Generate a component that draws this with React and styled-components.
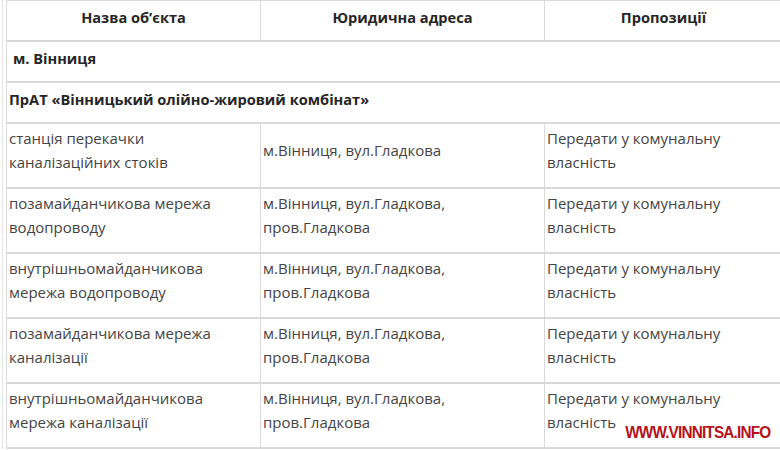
import React from "react";
import styled, { createGlobalStyle } from "styled-components";

const GlobalStyle = createGlobalStyle`
  body {
    margin: 0;
    background: #fff;
    font-family: "Open Sans", "Noto Sans", sans-serif;
  }
`;

const Page = styled.div`
  position: relative;
  width: 780px;
  height: 450px;
  overflow: hidden;
`;

const Frame = styled.div`
  margin-left: 2px;
  padding-left: 3px;
  border-left: 1px solid #e2e2e2;
`;

const Table = styled.table`
  border-collapse: collapse;
  width: 776px;
  table-layout: fixed;
  color: #3a3a3a;
  font-size: 15px;
`;

const HeadCell = styled.th`
  box-sizing: border-box;
  width: ${(p) => p.$w}px;
  height: 40px;
  padding: 0 4px 6px;
  border: 1px solid #d9d9d9;
  border-bottom: 2px solid #d9d9d9;
  font-size: 14.6px;
  font-weight: 700;
  color: #262626;
  text-align: center;
  vertical-align: middle;
`;

const GroupCell = styled.td`
  height: 33px;
  padding: 0 0 6px ${(p) => p.$indent}px;
  border: 1px solid #d9d9d9;
  border-bottom-width: 2px;
  font-size: 14.6px;
  font-weight: 700;
  color: #262626;
`;

const Cell = styled.td`
  height: 53px;
  padding: 0 2px 10px;
  border: 1px solid #d9d9d9;
  border-bottom-width: 2px;
  line-height: 24px;
  vertical-align: middle;
  color: #444;
`;

const Watermark = styled.div`
  position: absolute;
  right: 10px;
  bottom: 7px;
  font-family: "Liberation Sans", Arial, sans-serif;
  font-weight: 700;
  font-size: 17px;
  letter-spacing: -0.9px;
  color: #b5121b;
  transform: scaleX(0.9);
  transform-origin: right center;
`;

const rows = [
  ["станція перекачки каналізаційних стоків", "м.Вінниця, вул.Гладкова"],
  ["позамайданчикова мережа водопроводу", "м.Вінниця, вул.Гладкова, пров.Гладкова"],
  ["внутрішньомайданчикова мережа водопроводу", "м.Вінниця, вул.Гладкова, пров.Гладкова"],
  ["позамайданчикова мережа каналізації", "м.Вінниця, вул.Гладкова, пров.Гладкова"],
  ["внутрішньомайданчикова мережа каналізації", "м.Вінниця, вул.Гладкова, пров.Гладкова"],
];

export default function App() {
  return (
    <Page>
      <GlobalStyle />
      <Frame>
        <Table>
          <thead>
            <tr>
              <HeadCell $w={254}>Назва об’єкта</HeadCell>
              <HeadCell $w={284}>Юридична адреса</HeadCell>
              <HeadCell $w={238}>Пропозиції</HeadCell>
            </tr>
          </thead>
          <tbody>
            <tr>
              <GroupCell colSpan={3} $indent={6}>м. Вінниця</GroupCell>
            </tr>
            <tr>
              <GroupCell colSpan={3} $indent={2}>ПрАТ «Вінницький олійно-жировий комбінат»</GroupCell>
            </tr>
            {rows.map(([name, addr]) => (
              <tr key={name}>
                <Cell>{name}</Cell>
                <Cell>{addr}</Cell>
                <Cell>Передати у комунальну власність</Cell>
              </tr>
            ))}
          </tbody>
        </Table>
      </Frame>
      <Watermark>WWW.VINNITSA.INFO</Watermark>
    </Page>
  );
}
